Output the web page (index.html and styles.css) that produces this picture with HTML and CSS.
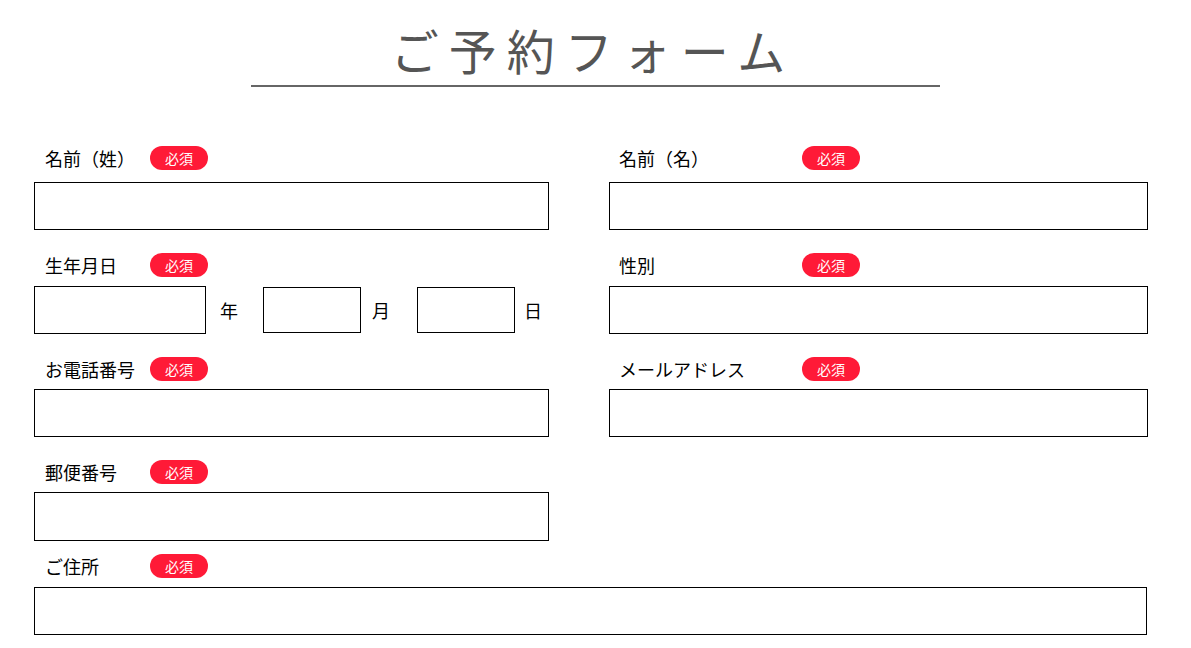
FILE: index.html
```html
<!DOCTYPE html>
<html lang="ja">
<head>
<meta charset="utf-8">
<title>ご予約フォーム</title>
<link rel="stylesheet" href="styles.css">
</head>
<body>
<header class="header">
  <h1 class="title">ご予約フォーム</h1>
</header>
<form class="form">
  <div class="field field-left">
    <div class="label-row"><span class="label">名前（姓）</span><span class="badge">必須</span></div>
    <input class="input" type="text">
  </div>
  <div class="field field-right">
    <div class="label-row"><span class="label">名前（名）</span><span class="badge">必須</span></div>
    <input class="input" type="text">
  </div>

  <div class="field field-left">
    <div class="label-row label-row-tight"><span class="label">生年月日</span><span class="badge">必須</span></div>
    <div class="birth">
      <input class="input input-year" type="text"><span class="unit unit-year">年</span>
      <input class="input input-small" type="text"><span class="unit unit-month">月</span>
      <input class="input input-small" type="text"><span class="unit unit-day">日</span>
    </div>
  </div>
  <div class="field field-right">
    <div class="label-row label-row-tight"><span class="label">性別</span><span class="badge">必須</span></div>
    <input class="input" type="text">
  </div>

  <div class="field field-left">
    <div class="label-row label-row-tighter"><span class="label">お電話番号</span><span class="badge">必須</span></div>
    <input class="input" type="text">
  </div>
  <div class="field field-right">
    <div class="label-row label-row-tighter"><span class="label">メールアドレス</span><span class="badge">必須</span></div>
    <input class="input" type="text">
  </div>

  <div class="field field-left">
    <div class="label-row label-row-tighter"><span class="label">郵便番号</span><span class="badge">必須</span></div>
    <input class="input input-tall" type="text">
  </div>

  <div class="field field-wide">
    <div class="label-row label-row-tight"><span class="label">ご住所</span><span class="badge">必須</span></div>
    <input class="input" type="text">
  </div>
</form>
</body>
</html>
```

FILE: styles.css
```css
* {
  box-sizing: border-box;
}

body {
  margin: 0;
  background: #fff;
  color: #000;
  font-family: "Noto Sans CJK JP", "Noto Sans", sans-serif;
}

.header {
  padding-top: 13px;
}

.title {
  width: 689px;
  margin: 0 auto;
  padding-right: 5px;
  border-bottom: 2px solid #666;
  text-align: center;
  font-size: 48px;
  font-weight: 400;
  line-height: 72px;
  letter-spacing: 10px;
  color: #555;
}

.form {
  display: grid;
  grid-template-columns: 515px 539px;
  column-gap: 60px;
  row-gap: 23px;
  padding: 59px 0 0 34px;
  margin: 0;
}

.field-left {
  grid-column: 1;
}

.field-right {
  grid-column: 2;
}

.field-wide {
  grid-column: 1 / span 2;
  width: 1113px;
  margin-top: -10px;
}

.label-row {
  display: flex;
  align-items: center;
  height: 24px;
  margin-bottom: 12px;
  padding-left: 11px;
}

.label-row-tight {
  margin-bottom: 9px;
}

.label-row-tighter {
  margin-bottom: 8px;
}

.field-right .label-row {
  padding-left: 10px;
}

.label {
  width: 105px;
  font-size: 18px;
  line-height: 24px;
}

.field-right .label {
  width: 183px;
}

.badge {
  width: 58px;
  height: 24px;
  border-radius: 12px;
  background: #ff1a37;
  color: #fff;
  font-size: 14px;
  line-height: 24px;
  text-align: center;
}

.input {
  display: block;
  width: 100%;
  height: 48px;
  margin: 0;
  padding: 0 10px;
  border: 1px solid #000;
  border-radius: 0;
  background: #fff;
  font: inherit;
  outline: none;
}

.input-tall {
  height: 49px;
}

.birth {
  display: flex;
  align-items: center;
}

.birth .input-year {
  width: 172px;
  height: 48px;
}

.birth .input-small {
  width: 98px;
  height: 46px;
}

.unit {
  font-size: 18px;
  line-height: 24px;
}

.unit-year {
  margin: 0 25px 0 14px;
}

.unit-month {
  margin: 0 27px 0 11px;
}

.unit-day {
  margin-left: 9px;
}
```
